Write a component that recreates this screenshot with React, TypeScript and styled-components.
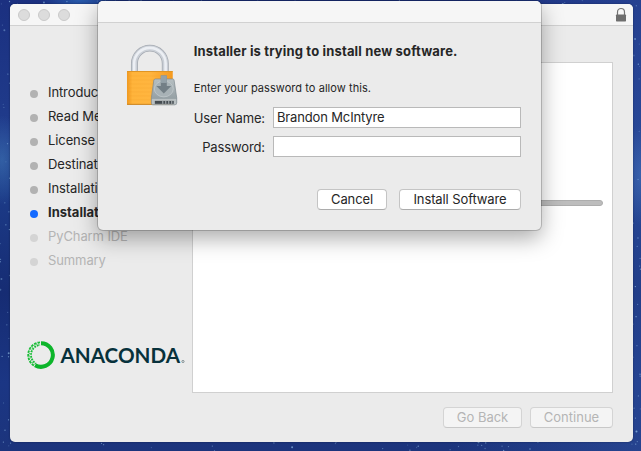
import React from "react";
import styled, { createGlobalStyle } from "styled-components";

const Global = createGlobalStyle`
  *{box-sizing:border-box}
  body{margin:0;overflow:hidden;font-family:Inter,"Liberation Sans",sans-serif;font-size:13px;color:#262626}
`;

const Desktop = styled.div`
  position: relative;
  width: 641px;
  height: 451px;
  padding: 4px 8px 9px 10px;
  overflow: hidden;
  background:
    radial-gradient(ellipse 22px 45px at 2px 160px, rgba(70, 130, 190, 0.5), transparent),
    radial-gradient(ellipse 18px 50px at 641px 175px, rgba(80, 130, 200, 0.45), transparent),
    radial-gradient(ellipse 40px 12px at 80px 0, rgba(50, 120, 200, 0.6), transparent),
    linear-gradient(90deg, transparent 70%, rgba(50, 85, 165, 0.45)),
    linear-gradient(180deg, #1b3080 0%, #203c8c 30%, #1c3b88 42%, #162c73 65%, #1b3684 85%, #1c347c 100%);
`;
const Stars = styled.svg`
  position: absolute;
  inset: 0;
`;
const Window = styled.main`
  position: relative;
  height: 438px;
  width: 623px;
  display: flex;
  flex-direction: column;
  background: #ebebeb;
  border-radius: 5px;
  overflow: hidden;
  box-shadow: 0 0 2px rgba(0, 0, 0, 0.4);
`;
const TitleBar = styled.header`
  height: 22px;
  flex: none;
  display: flex;
  align-items: center;
  justify-content: space-between;
  padding: 0 6px 0 8px;
  background: #f6f6f6;
  border-bottom: 1px solid #d1d1d1;
`;
const Lights = styled.div`
  display: flex;
  gap: 8px;
`;
const Light = styled.i`
  width: 12px;
  height: 12px;
  border-radius: 50%;
  background: #dcdcdc;
  border: 1px solid #c9c9c9;
`;
const Body = styled.div`
  display: flex;
  height: 367px;
`;
const Sidebar = styled.aside`
  width: 182px;
  flex: none;
  padding: 54px 0 0 20px;
`;
const Steps = styled.ul`
  list-style: none;
  margin: 0;
  padding: 0;
`;
const Step = styled.li<{ $state: "done" | "active" | "todo" }>`
  height: 24px;
  line-height: 24px;
  display: flex;
  align-items: center;
  gap: 10px;
  white-space: nowrap;
  color: ${(p) => (p.$state === "todo" ? "#b4b4b4" : "#262626")};
  font-weight: ${(p) => (p.$state === "active" ? 700 : 400)};
  letter-spacing: ${(p) => (p.$state === "active" ? "0" : "-0.1px")};
  &::before {
    content: "";
    width: 8px;
    height: 8px;
    margin-top: 4px;
    border-radius: 50%;
    background: ${(p) => (p.$state === "active" ? "#146aff" : p.$state === "todo" ? "#d4d4d4" : "#b2b2b2")};
  }
`;
const Brand = styled.div`
  margin: 69px 0 0 -3px;
  height: 28px;
  display: flex;
`;
const Content = styled.section`
  width: 421px;
  height: 331px;
  margin-top: 36px;
  padding: 137px 9px 0;
  background: #fff;
  border: 1px solid #d0d0d0;
`;
const Progress = styled.div`
  height: 6px;
  border-radius: 3px;
  background: #bdbdbd;
  border: 1px solid #adadad;
`;
const Footer = styled.footer`
  display: flex;
  justify-content: flex-end;
  gap: 8px;
  padding: 14px 20px 0 0;
`;
const Button = styled.button<{ $w: number; $tracking?: number }>`
  width: ${(p) => p.$w}px;
  height: 21px;
  padding: 0 0 1px;
  border: 1px solid #c4c4c4;
  border-bottom-color: #acacac;
  border-radius: 4px;
  background: #fff;
  color: #262626;
  font: 13px/17px Inter, "Liberation Sans", sans-serif;
  letter-spacing: ${(p) => p.$tracking ?? 0}px;
  white-space: nowrap;
  &:disabled {
    color: #b5b5b5;
    background: #f4f4f4;
    border-color: #d4d4d4;
    border-bottom-color: #c8c8c8;
  }
`;
const Dialog = styled.section`
  position: absolute;
  left: 98px;
  top: 1px;
  width: 443px;
  height: 229px;
  border-radius: 5px;
  background: #ebebeb;
  box-shadow: 0 0 0 1px rgba(0, 0, 0, 0.18), 0 8px 22px rgba(0, 0, 0, 0.34);
`;
const DialogBar = styled.div`
  height: 22px;
  border-radius: 5px 5px 0 0;
  background: #f6f6f6;
  border-bottom: 1px solid #d1d1d1;
`;
const DialogBody = styled.div`
  display: flex;
  padding: 20px 20px 0 26px;
`;
const Form = styled.form`
  flex: 1;
  margin-left: 14px;
`;
const Heading = styled.h1`
  margin: 0;
  font-size: 13px;
  line-height: 17px;
  font-weight: 700;
  letter-spacing: 0.16px;
  white-space: nowrap;
`;
const Hint = styled.p`
  margin: 21px 0 11px;
  font-size: 11px;
  line-height: 15px;
  letter-spacing: 0.06px;
`;
const Field = styled.label`
  display: flex;
  align-items: center;
  justify-content: flex-end;
  gap: 8px;
  height: 21px;
  margin-bottom: 8px;
  white-space: nowrap;
  letter-spacing: -0.12px;
`;
const Input = styled.input`
  width: 248px;
  height: 21px;
  flex: none;
  border: 1px solid #b9b9b9;
  padding: 0 3px 1px;
  background: #fff;
  color: #262626;
  font: 13px Inter, "Liberation Sans", sans-serif;
  letter-spacing: -0.15px;
  outline: 0;
  border-radius: 0;
`;
const Actions = styled.div`
  display: flex;
  justify-content: flex-end;
  gap: 12px;
  margin-top: 32px;
`;

const noise = (n: number) => {
  const v = Math.sin(n * 127.1 + 3.7) * 43758.5453;
  return v - Math.floor(v);
};
const stars = Array.from({ length: 120 }, (_, i) => {
  const edge = i % 4;
  const a = noise(i);
  const b = noise(i + 500);
  return {
    x: edge === 0 ? a * 10 : edge === 1 ? 633 + a * 8 : a * 641,
    y: edge < 2 ? b * 451 : edge === 2 ? 442 + b * 9 : b * 4,
    r: i % 9 === 0 ? 1 : 0.65,
    o: 0.2 + noise(i + 900) * 0.5,
  };
});

function Padlock() {
  return (
    <svg width="56" height="64" viewBox="124 43 56 64">
      <defs>
        <linearGradient id="gold">
          <stop stopColor="#ef9820" />
          <stop offset=".12" stopColor="#ffb43b" />
          <stop offset=".5" stopColor="#ffb53f" />
          <stop offset="1" stopColor="#f69a1e" />
        </linearGradient>
        <linearGradient id="drive" x2="0" y2="1">
          <stop stopColor="#b6bfc2" />
          <stop offset="1" stopColor="#8b969b" />
        </linearGradient>
      </defs>
      <path d="M134.500 72V63.500A15.500 15.500 0 0 1 165.500 63.500V72" fill="none" stroke="#a4a9b1" strokeWidth="7" />
      <path d="M134.500 72V63.500A15.500 15.500 0 0 1 165.500 63.500V72" fill="none" stroke="#cbd0d7" strokeWidth="5.400" />
      <path d="M134.200 72V63.500A15.800 15.800 0 0 1 165.800 63.500V72" fill="none" stroke="#eceff4" strokeWidth="2.600" />
      <rect x="127" y="71" width="46" height="34" rx="1" fill="url(#gold)" />
      <path d="M127 71.500H173" stroke="#e09523" />
      <path d="M127 104.500H173" stroke="#c98424" />
      <path d="M129 76H172M129 80H172M129 84H172M129 88H172M129 92H172M129 96H172M129 100H172" stroke="#e99420" strokeWidth=".5" opacity=".3" />
      <path d="M155 79H173Q174 79 174.300 80L177 98V103Q177 105 175 105H153Q151.500 105 151.500 103V98L154 80Z" fill="url(#drive)" stroke="#7d898e" strokeWidth=".7" />
      <ellipse cx="164" cy="89" rx="9.500" ry="8" fill="#a8b2b6" stroke="#c5cdcf" strokeWidth=".7" />
      <path d="M161 75.500H167V86H171.500L164 93.500L156.500 86H161Z" fill="#737f86" />
      <path d="M161 75.500H167V83H161Z" fill="#94a1a8" />
      <path d="M152 99H176.500V104.500H152Z" fill="#b9c0c2" />
      <path d="M155 101H174V104H155Z" fill="#444b50" />
      <path d="M163 101V104M166 101V104M169 101V104M172 101V104" stroke="#b2b8bb" />
    </svg>
  );
}

function Anaconda() {
  return (
    <svg width="160" height="28" viewBox="27 341 160 28">
      <path d="M41 343.200A11.800 11.800 0 1 1 35.100 365.200" fill="none" stroke="#0db52b" strokeWidth="4" />
      <path d="M40 342.300A12.700 12.700 0 0 0 34.600 366" fill="none" stroke="#18bc36" strokeWidth="1.800" strokeDasharray="2.600 1" />
      <path d="M40 345A10 10 0 0 0 36 363.600" fill="none" stroke="#18bc36" strokeWidth="1.800" strokeDasharray="1.800 1" strokeDashoffset="1.400" />
      <path d="M39 343.600A11.500 11.500 0 0 0 35 364.900" fill="none" stroke="#4ac960" strokeWidth="1.300" strokeDasharray="1 1.400" />
      <text x="60.500" y="363" textLength="119.500" lengthAdjust="spacingAndGlyphs" fontFamily="Lato" fontSize="21.500" fontWeight="700" fill="#07313b">ANACONDA</text>
      <circle cx="183" cy="361.500" r="1.100" fill="none" stroke="#6b7b80" strokeWidth=".8" />
    </svg>
  );
}

export default function App() {
  return (
    <>
      <Global />
      <Desktop>
        <Stars width="641" height="451">
          {stars.map((s, i) => (
            <circle key={i} cx={s.x} cy={s.y} r={s.r} fill="#9cc9ee" opacity={s.o} />
          ))}
        </Stars>
        <Window>
          <TitleBar>
            <Lights><Light /><Light /><Light /></Lights>
            <svg width="12" height="16" viewBox="0 0 12 16">
              <path d="M2.500 8V5C2.500 .3 9.500 .3 9.500 5V8" fill="none" stroke="#747474" strokeWidth="1.200" />
              <rect x="1" y="7.500" width="10" height="7" rx=".7" fill="#6e6e6e" />
            </svg>
          </TitleBar>
          <Body>
            <Sidebar>
              <Steps>
                <Step $state="done">Introduction</Step>
                <Step $state="done">Read Me</Step>
                <Step $state="done">License</Step>
                <Step $state="done">Destination Select</Step>
                <Step $state="done">Installation Type</Step>
                <Step $state="active">Installation</Step>
                <Step $state="todo">PyCharm IDE</Step>
                <Step $state="todo">Summary</Step>
              </Steps>
              <Brand><Anaconda /></Brand>
            </Sidebar>
            <Content><Progress /></Content>
          </Body>
          <Footer>
            <Button disabled $w={79}>Go Back</Button>
            <Button disabled $w={83}>Continue</Button>
          </Footer>
        </Window>
        <Dialog role="dialog">
          <DialogBar />
          <DialogBody>
            <Padlock />
            <Form>
              <Heading>Installer is trying to install new software.</Heading>
              <Hint>Enter your password to allow this.</Hint>
              <Field>User Name:<Input defaultValue="Brandon McIntyre" /></Field>
              <Field>Password:<Input type="password" /></Field>
              <Actions>
                <Button type="button" $w={70} $tracking={-0.1}>Cancel</Button>
                <Button type="button" $w={122} $tracking={-0.1}>Install Software</Button>
              </Actions>
            </Form>
          </DialogBody>
        </Dialog>
      </Desktop>
    </>
  );
}
